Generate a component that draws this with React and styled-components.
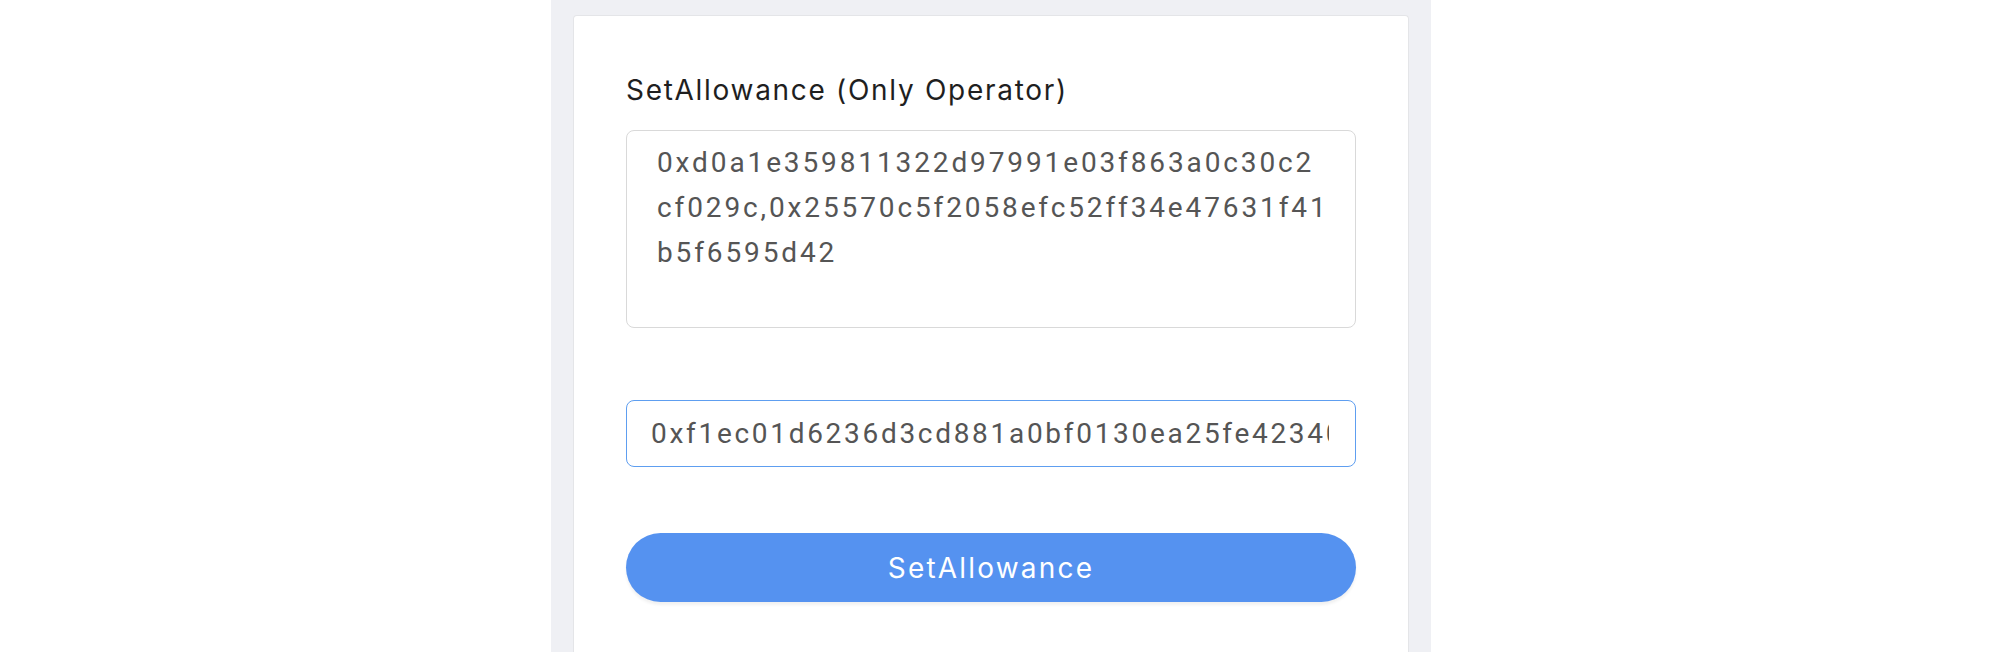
import React from "react";
import styled, { createGlobalStyle } from "styled-components";

const GlobalStyle = createGlobalStyle`
	html, body {
		margin: 0;
		padding: 0;
		background: #ffffff;
		font-family: Inter, "Noto Sans", "Liberation Sans", sans-serif;
	}
`;

const Page = styled.div`
	height: 652px;
	overflow: hidden;
	display: flex;
`;

const Panel = styled.div`
	margin-left: 551px;
	width: 880px;
	box-sizing: border-box;
	padding: 15px 22px 0 22px;
	background: #eff0f4;
`;

const Card = styled.div`
	background: #ffffff;
	border: 1px solid #e4e5e8;
	border-bottom: none;
	border-radius: 4px 4px 0 0;
	height: 100%;
	box-sizing: border-box;
	padding: 57px 52px 0 52px;
	display: flex;
	flex-direction: column;
`;

const Label = styled.div`
	font-size: 28px;
	line-height: 34px;
	letter-spacing: 1.7px;
	color: #1f1f1f;
	margin-bottom: 23px;
`;

// hex values read better in Roboto, and it wraps them like the original
const Area = styled.textarea`
	box-sizing: border-box;
	width: 100%;
	height: 198px;
	resize: none;
	border: 1.5px solid #d9d9d9;
	border-radius: 8px;
	padding: 9px 24px 9px 30px;
	font-family: Roboto, "Liberation Sans", sans-serif;
	font-size: 28px;
	line-height: 45px;
	letter-spacing: 2.88px;
	color: #555555;
	word-break: break-all;
	outline: none;
	overflow: hidden;
`;

const Field = styled.input`
	box-sizing: border-box;
	width: 100%;
	height: 67px;
	margin-top: 72px;
	border: 1.5px solid ${(p) => (p.$active ? "#5e9ef0" : "#d9d9d9")};
	border-radius: 8px;
	padding: 0 26px 0 24px;
	font-family: Roboto, "Liberation Sans", sans-serif;
	font-size: 28px;
	letter-spacing: 2.7px;
	color: #555555;
	outline: none;
`;

const Button = styled.button`
	margin-top: 66px;
	width: 100%;
	height: 69px;
	border: none;
	border-radius: 35px;
	background: #5592f0;
	color: #ffffff;
	font-family: inherit;
	font-size: 28px;
	letter-spacing: 2.2px;
	box-shadow: 0 3px 3px rgba(0, 0, 0, 0.06);
	cursor: pointer;
`;

const spenders =
	"0xd0a1e359811322d97991e03f863a0c30c2cf029c,0x25570c5f2058efc52ff34e47631f41b5f6595d42";

export default function App() {
	return (
		<Page>
			<GlobalStyle />
			<Panel>
				<Card>
					<Label>SetAllowance (Only Operator)</Label>
					<Area defaultValue={spenders} readOnly />
					<Field
						$active
						defaultValue="0xf1ec01d6236d3cd881a0bf0130ea25fe4234000000000000"
						readOnly
					/>
					<Button>SetAllowance</Button>
				</Card>
			</Panel>
		</Page>
	);
}
